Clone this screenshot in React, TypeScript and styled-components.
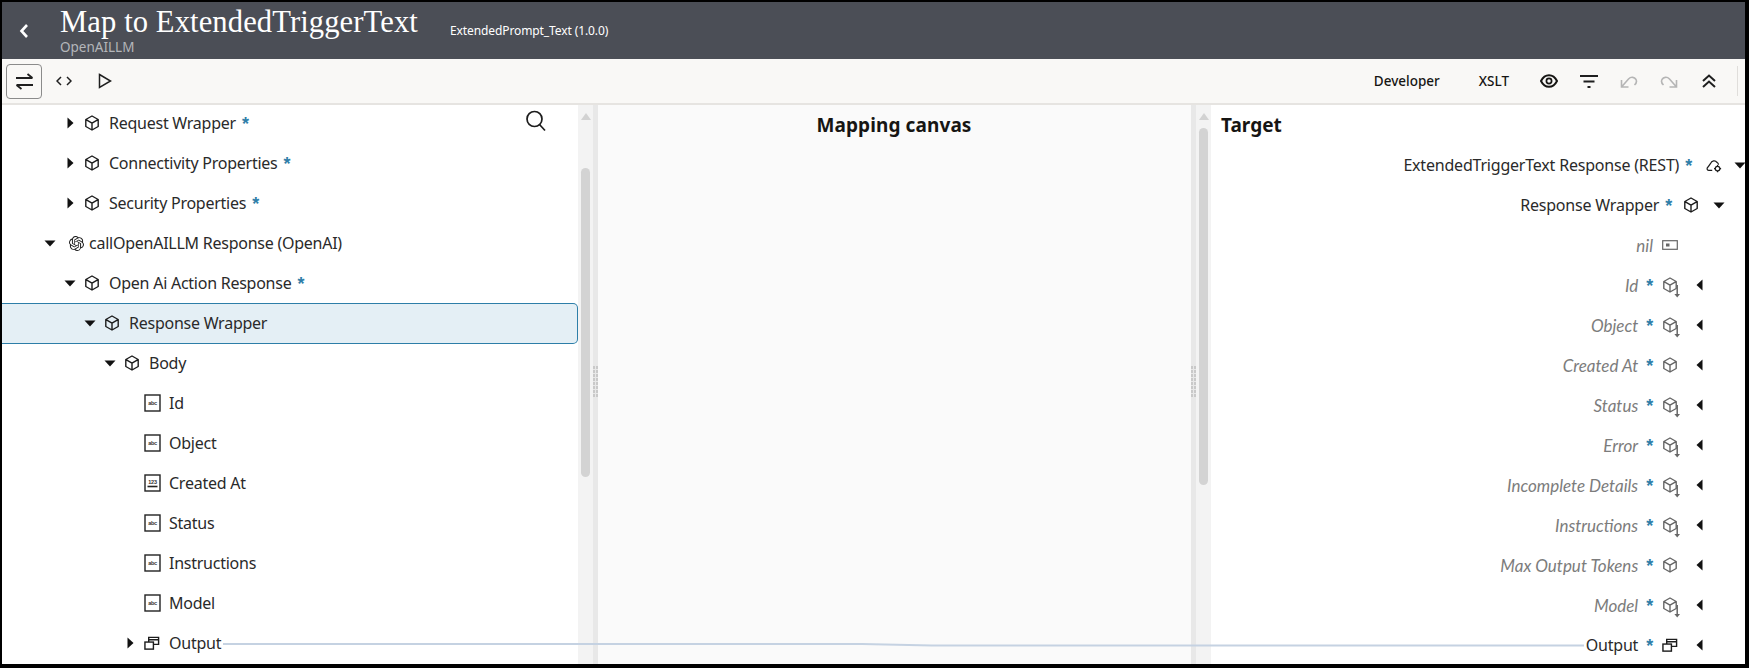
import React from "react";
import styled, { createGlobalStyle } from "styled-components";
import { SiOpenai } from "react-icons/si";

const Global = createGlobalStyle`
  html, body { margin: 0; padding: 0; background: #000; }
  * { box-sizing: border-box; }
`;
const SANS = `"Noto Sans", "Open Sans", sans-serif`;
const Frame = styled.div`
  width: 1749px; height: 668px; padding: 2px 4px 4px 2px; background: #000;
  display: flex; flex-direction: column; font-family: ${SANS}; color: #2a2a2a; overflow: hidden;
`;
const Header = styled.header`
  height: 57px; flex: none; background: #4b4e56; display: flex; align-items: center; color: #fff;
`;
const Back = styled.button`
  width: 42px; height: 50px; padding: 0 0 0 1px; border: 0; background: none; color: #fff;
  display: flex; align-items: center; justify-content: center;
`;
const TitleBlock = styled.div`display: flex; flex-direction: column; width: 390px; margin-top: -3px; margin-left: 16px;`;
const Title = styled.h1`
  margin: 0; font: 400 30.6px/36px "Liberation Serif", serif; white-space: nowrap; color: #fff; letter-spacing: 0.1px;
`;
const Sub = styled.div`font-size: 13.5px; line-height: 15px; color: #b4b6ba;`;
const Version = styled.div`font-size: 12px; color: #fff; margin-top: -1px; letter-spacing: -0.1px;`;
const Toolbar = styled.div`
  height: 46px; flex: none; background: #f9f8f6; border-bottom: 2px solid #e6e4e1;
  display: flex; align-items: center; padding-left: 4px; padding-right: 7px;
`;
const ToolButton = styled.button<{ $active?: boolean }>`
  width: 36px; height: 35px; padding: 0; background: none; display: flex; align-items: center; justify-content: center;
  border-radius: 4px; border: 1px solid ${p => (p.$active ? "#8b8b8b" : "transparent")}; color: #1f1f1f; flex: none;
`;
const IconGroup = styled.div`display: flex; align-items: center; margin-left: 4px; gap: 5px;`;
const Spacer = styled.div`flex: 1;`;
const TextTool = styled.span<{ $after?: number }>`
  font-size: 13.5px; font-weight: 500; color: #161513; white-space: nowrap; margin-right: ${p => p.$after ?? 0}px;
`;
const RightTools = styled.div`display: flex; align-items: center; gap: 4px; margin-left: 22px;`;
const Divider = styled.div`width: 1px; height: 30px; background: #e0dedb; margin-left: 10px;`;
const Main = styled.main`flex: 1; min-height: 0; display: flex; position: relative; background: #fff;`;
const SourcePane = styled.section`width: 576px; flex: none; overflow: hidden; position: relative;`;
const TreeRows = styled.div`margin-top: -2px;`;
const Row = styled.div<{ $level: number; $selected?: boolean }>`
  height: ${p => (p.$selected ? 41 : 40)}px; margin-bottom: ${p => (p.$selected ? -1 : 0)}px;
  padding-left: ${p => 40 + p.$level * 20}px; display: flex; align-items: center; font-size: 16px; letter-spacing: -0.25px;
  ${p => p.$selected && `background:#e4eff5;border:1px solid #2d7ea8;border-left:0;border-radius:0 5px 5px 0;padding-bottom:1px;`}
`;
const Slot = styled.span`width: 16px; height: 16px; flex: none; display: flex; align-items: center; justify-content: center; color: #111;`;
const IconBox = styled.span<{ $gap?: number; $before?: number }>`
  width: 16px; height: 16px; flex: none; display: flex; align-items: center; justify-content: center;
  margin-left: ${p => p.$before ?? 6}px; margin-right: ${p => p.$gap ?? 9}px; color: #1c1c1c;
`;
const Star = styled.span`color: #2f7ea8; font: 700 18px/16px "Liberation Sans", sans-serif; margin-left: 6px; height: 14px;`;
const SearchButton = styled.span`position: absolute; top: 5px; right: 31px; color: #1c1c1c; display: flex;`;
const Track = styled.div`width: 15px; flex: none; background: #f3f3f3; display: flex; flex-direction: column; align-items: center; padding-top: 8px;`;
const UpArrow = styled.div`width: 0; height: 0; border-left: 5px solid transparent; border-right: 5px solid transparent; border-bottom: 7px solid #d2d2d2;`;
const Thumb = styled.div<{ $top: number; $height: number }>`
  width: 9px; border-radius: 4.5px; background: #d3d3d3; margin-top: ${p => p.$top}px; height: ${p => p.$height}px;
`;
const Splitter = styled.div`width: 5px; flex: none; background: #e8e8e8; display: flex; align-items: center; justify-content: center; padding-bottom: 2px;`;
const Grip = styled.div`display: grid; grid-template-columns: 2px 2px; gap: 1px 1px; margin-top: -5px;`;
const GripDot = styled.i`display: block; width: 2px; height: 3px; background: #c9c9c9;`;
const Canvas = styled.section`width: 593px; flex: none; background: #fafafa; display: flex; justify-content: center;`;
const CanvasTitle = styled.h2`margin: 8px 0 0; font-size: 19px; line-height: 24px; font-weight: 700; color: #161513; padding-right: 1px; letter-spacing: 0.1px;`;
const TargetPane = styled.section`flex: 1; min-width: 0; overflow: hidden; background: #fff;`;
const TargetTitle = styled.h2`margin: 8px 0 0 10px; font-size: 19px; line-height: 24px; font-weight: 700; color: #161513; height: 32px;`;
const TargetRow = styled.div<{ $inset: number }>`
  height: 40px; display: flex; align-items: center; justify-content: flex-end; font-size: 16px; letter-spacing: -0.2px;
  padding-right: ${p => Math.max(p.$inset, 0)}px; margin-right: ${p => Math.min(p.$inset, 0)}px;
`;
const TargetLabel = styled.span<{ $muted?: boolean; $pad?: number }>`
  ${p => p.$muted ? `font-family:Lato,sans-serif;font-style:italic;font-size:17px;letter-spacing:0;color:#7c7c7c;` : ""}
  white-space: nowrap; padding-right: ${p => p.$pad ?? 0}px;
`;
const TargetIcon = styled.span<{ $muted?: boolean; $before?: number; $after?: number }>`
  width: 16px; height: 16px; flex: none; display: flex; align-items: center; justify-content: center;
  margin-left: ${p => p.$before ?? 9}px; margin-right: ${p => p.$after ?? 13}px; color: ${p => (p.$muted ? "#666" : "#1c1c1c")};
`;
const Connector = styled.svg`position: absolute; left: 0; top: 0; width: 100%; height: 100%; pointer-events: none;`;

const Cube = ({ down }: { down?: boolean }) => (
  <svg width="16" height="16" viewBox="0 0 16 16" fill="none" stroke="currentColor" strokeWidth="1.4" strokeLinejoin="round" style={{ overflow: "visible" }}>
    <path d="M8 1 L14.2 4.5 V11.5 L8 15 L1.8 11.5 V4.5 Z M2 4.7 L8 8.2 L14 4.7 M8 8.2 V14.8" />
    {down && <path d="M15.2 8 V17.5" strokeWidth="1.5" />}
    {down && <path d="M12.4 17 H18 L15.2 20.5 Z" fill="currentColor" stroke="none" />}
  </svg>
);
const Leaf = ({ label, bar }: { label: string; bar?: boolean }) => (
  <svg width="17" height="18" viewBox="0 0 17 18" fill="none" style={{ overflow: "visible" }}>
    <rect x="1" y="1" width="15" height="16" fill="#fff" stroke="#222" strokeWidth="1.4" />
    <text x="8.5" y={bar ? 9.5 : 11} textAnchor="middle" fontSize="5.5" fontFamily="Liberation Sans" fontWeight="700" fill="#333">{label}</text>
    {bar && <path d="M3.5 12.5 H13.5" stroke="#222" strokeWidth="1.6" />}
  </svg>
);
const Stack = () => (
  <svg width="17" height="16" viewBox="0 0 17 16" fill="none" stroke="currentColor" strokeWidth="1.5">
    <rect x="1" y="7" width="9" height="7.5" />
    <path d="M5 7 V2 H15.5 V9.5 H10 M5 4.6 H15.5" />
  </svg>
);
const Nil = () => (
  <svg width="16" height="10" viewBox="0 0 16 10" fill="none">
    <rect x="0.7" y="0.7" width="14.6" height="8.6" stroke="#666" strokeWidth="1.2" />
    <rect x="4" y="3.5" width="3.5" height="3" fill="#666" />
  </svg>
);
const CloudGear = () => (
  <svg width="19" height="17" viewBox="0 0 18 16" fill="none" stroke="currentColor" strokeWidth="1.4" strokeLinejoin="round">
    <path d="M7 13.5 H3 C1 13.5 0.6 11 2.2 9.8 L5.2 5.6 C6.3 2.4 10.6 1.8 12.2 4.4 C13.4 5 14 6 14 7.2" />
    <circle cx="13" cy="11.5" r="2.6" />
    <path d="M13 7.5 V8.8 M13 14.2 V15.5 M9 11.5 H10.3 M15.7 11.5 H17" />
  </svg>
);
const Right = () => <svg width="7" height="12" viewBox="0 0 7 12"><path d="M0.5 0.5 L6.5 6 L0.5 11.5 Z" fill="currentColor" /></svg>;
const Down = () => <svg width="12" height="7" viewBox="0 0 12 7"><path d="M0.5 0.5 H11.5 L6 6.5 Z" fill="currentColor" /></svg>;
const Left = () => <svg width="7" height="12" viewBox="0 0 7 12"><path d="M6.5 0.5 L0.5 6 L6.5 11.5 Z" fill="currentColor" /></svg>;

const Line = ({ w, h, color = "currentColor", sw = 2, d }: { w: number; h: number; color?: string; sw?: number; d: string }) => (
  <svg width={w} height={h} viewBox={`0 0 ${w} ${h}`} fill="none" stroke={color} strokeWidth={sw}><path d={d} /></svg>
);

type Src = { level: number; label: string; kind: "cube" | "ai" | "abc" | "123" | "stack"; arrow?: "r" | "d"; star?: boolean; selected?: boolean };
const source: Src[] = [
  { level: 1, label: "Request Wrapper", kind: "cube", arrow: "r", star: true },
  { level: 1, label: "Connectivity Properties", kind: "cube", arrow: "r", star: true },
  { level: 1, label: "Security Properties", kind: "cube", arrow: "r", star: true },
  { level: 0, label: "callOpenAILLM Response (OpenAI)", kind: "ai", arrow: "d" },
  { level: 1, label: "Open Ai Action Response", kind: "cube", arrow: "d", star: true },
  { level: 2, label: "Response Wrapper", kind: "cube", arrow: "d", selected: true },
  { level: 3, label: "Body", kind: "cube", arrow: "d" },
  { level: 4, label: "Id", kind: "abc" },
  { level: 4, label: "Object", kind: "abc" },
  { level: 4, label: "Created At", kind: "123" },
  { level: 4, label: "Status", kind: "abc" },
  { level: 4, label: "Instructions", kind: "abc" },
  { level: 4, label: "Model", kind: "abc" },
  { level: 4, label: "Output", kind: "stack", arrow: "r" },
];
const target = [
  { label: "Id", down: true }, { label: "Object", down: true }, { label: "Created At" }, { label: "Status", down: true },
  { label: "Error", down: true }, { label: "Incomplete Details", down: true }, { label: "Instructions", down: true },
  { label: "Max Output Tokens" }, { label: "Model", down: true },
];

const SrcIcon = ({ kind }: { kind: Src["kind"] }) => {
  if (kind === "cube") return <Cube />;
  if (kind === "ai") return <SiOpenai size={15} />;
  if (kind === "abc") return <Leaf label="abc" />;
  if (kind === "123") return <Leaf label="123" bar />;
  return <Stack />;
};

export default function App() {
  return (
    <Frame>
      <Global />
      <Header>
        <Back aria-label="Back"><Line w={12} h={16} sw={2.6} d="M9 2 L3.5 8 L9 14" /></Back>
        <TitleBlock>
          <Title>Map to ExtendedTriggerText</Title>
          <Sub>OpenAILLM</Sub>
        </TitleBlock>
        <Version>ExtendedPrompt_Text (1.0.0)</Version>
      </Header>
      <Toolbar>
        <ToolButton $active aria-label="Mapper">
          <Line w={19} h={17} sw={1.8} d="M1 5 H17.5 M12.5 1 L17.5 5 M18 12 H1.5 M6.5 16 L1.5 12" />
        </ToolButton>
        <IconGroup>
          <ToolButton aria-label="Code"><Line w={16} h={10} sw={1.5} d="M5 1 L1 5 L5 9 M11 1 L15 5 L11 9" /></ToolButton>
          <ToolButton aria-label="Test"><Line w={14} h={16} sw={1.5} d="M1.5 1.5 L12.5 8 L1.5 14.5 Z" /></ToolButton>
        </IconGroup>
        <Spacer />
        <TextTool $after={39}>Developer</TextTool>
        <TextTool>XSLT</TextTool>
        <RightTools>
          <ToolButton aria-label="View">
            <svg width="18" height="14" viewBox="0 0 18 14" fill="none" stroke="#161513" strokeWidth="2">
              <path d="M1 7 C3 3 6 1.2 9 1.2 C12 1.2 15 3 17 7 C15 11 12 12.8 9 12.8 C6 12.8 3 11 1 7 Z" />
              <circle cx="9" cy="7" r="2.6" strokeWidth="1.7" />
            </svg>
          </ToolButton>
          <ToolButton aria-label="Filter"><Line w={18} h={14} d="M0 2 H18 M3.5 7.5 H14.5 M7.5 13 H10.5" /></ToolButton>
          <ToolButton aria-label="Undo"><Line w={18} h={14} color="#b5b5b5" sw={1.6} d="M1.5 6 V13 H8.5 M1.5 13 L8.5 5 C11 2.4 14.5 3 16 5.5 C17 7.5 16.2 9.5 14.5 11" /></ToolButton>
          <ToolButton aria-label="Redo"><Line w={18} h={14} color="#b5b5b5" sw={1.6} d="M16.5 6 V13 H9.5 M16.5 13 L9.5 5 C7 2.4 3.5 3 2 5.5 C1 7.5 1.8 9.5 3.5 11" /></ToolButton>
          <ToolButton aria-label="Collapse"><Line w={14} h={14} sw={2} d="M1 7 L7 1.5 L13 7 M1 13 L7 7.5 L13 13" /></ToolButton>
        </RightTools>
        <Divider />
      </Toolbar>
      <Main>
        <SourcePane>
          <TreeRows>
            {source.map(r => (
              <Row key={r.label + r.level} $level={r.level} $selected={r.selected}>
                <Slot>{r.arrow === "r" ? <Right /> : r.arrow === "d" ? <Down /> : null}</Slot>
                <IconBox $before={r.kind === "ai" ? 10 : 6} $gap={r.kind === "ai" ? 5 : 9}><SrcIcon kind={r.kind} /></IconBox>
                <span>{r.label}</span>
                {r.star && <Star>*</Star>}
              </Row>
            ))}
          </TreeRows>
          <SearchButton>
            <svg width="22" height="22" viewBox="0 0 22 22" fill="none" stroke="currentColor" strokeWidth="1.7">
              <circle cx="9.5" cy="9" r="7.5" /><path d="M14.5 14.5 L20 20.5" />
            </svg>
          </SearchButton>
        </SourcePane>
        <Track><UpArrow /><Thumb $top={48} $height={309} /></Track>
        <Splitter><Grip>{Array.from({ length: 16 }, (_, i) => <GripDot key={i} />)}</Grip></Splitter>
        <Canvas><CanvasTitle>Mapping canvas</CanvasTitle></Canvas>
        <Splitter><Grip>{Array.from({ length: 16 }, (_, i) => <GripDot key={i} />)}</Grip></Splitter>
        <Track><UpArrow /><Thumb $top={8} $height={357} /></Track>
        <TargetPane>
          <TargetTitle>Target</TargetTitle>
          <TargetRow $inset={-3}>
            <TargetLabel>ExtendedTriggerText Response (REST)</TargetLabel><Star>*</Star>
            <TargetIcon $before={14} $after={10}><CloudGear /></TargetIcon>
            <Slot><Down /></Slot>
          </TargetRow>
          <TargetRow $inset={18}>
            <TargetLabel>Response Wrapper</TargetLabel><Star>*</Star>
            <TargetIcon $muted={false} $before={11} $after={12}><Cube /></TargetIcon>
            <Slot><Down /></Slot>
          </TargetRow>
          <TargetRow $inset={67}>
            <TargetLabel $muted>nil</TargetLabel>
            <TargetIcon $muted $before={9} $after={0}><Nil /></TargetIcon>
          </TargetRow>
          {target.map(t => (
            <TargetRow key={t.label} $inset={38}>
              <TargetLabel $muted $pad={2}>{t.label}</TargetLabel><Star>*</Star>
              <TargetIcon $muted><Cube down={t.down} /></TargetIcon>
              <Slot><Left /></Slot>
            </TargetRow>
          ))}
          <TargetRow $inset={38}>
            <TargetLabel $pad={2}>Output</TargetLabel><Star>*</Star>
            <TargetIcon><Stack /></TargetIcon>
            <Slot><Left /></Slot>
          </TargetRow>
        </TargetPane>
        <Connector aria-hidden="true">
          <path d="M221 539 H 860 L 930 540.5 H 1582" fill="none" stroke="#c5d2e2" strokeWidth="2" />
        </Connector>
      </Main>
    </Frame>
  );
}
